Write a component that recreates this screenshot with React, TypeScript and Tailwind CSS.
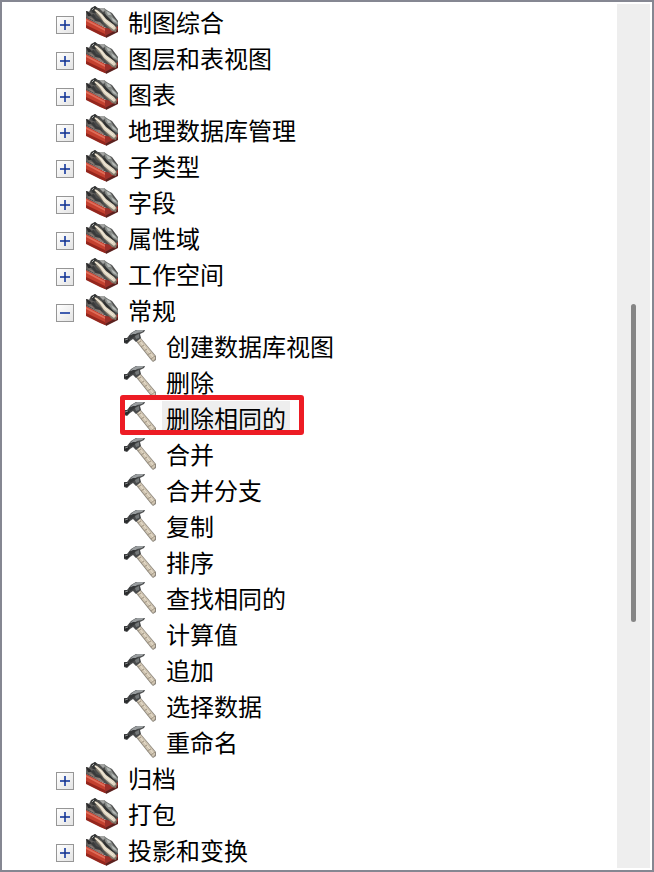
import { useState } from "react";

type Toolbox = { name: string; tools?: string[] };

const toolboxes: Toolbox[] = [
  { name: "制图综合" },
  { name: "图层和表视图" },
  { name: "图表" },
  { name: "地理数据库管理" },
  { name: "子类型" },
  { name: "字段" },
  { name: "属性域" },
  { name: "工作空间" },
  {
    name: "常规",
    tools: [
      "创建数据库视图",
      "删除",
      "删除相同的",
      "合并",
      "合并分支",
      "复制",
      "排序",
      "查找相同的",
      "计算值",
      "追加",
      "选择数据",
      "重命名",
    ],
  },
  { name: "归档" },
  { name: "打包" },
  { name: "投影和变换" },
];

function ToolboxIcon() {
  return (
    <svg className="size-8 shrink-0" viewBox="0 0 32 32" aria-hidden="true">
      <path d="M0 12 L19 22 L32 18 V25 L20 31 L0 21Z" fill="#9b302a" />
      <path d="M0 12 L19 22 V31 L0 21Z" fill="#c4402f" />
      <path d="M0 13 L19 23 V25 L0 15Z" fill="#df6d59" />
      <path d="M0 19 L19 28 V31 L14 29 L0 22Z" fill="#94261d" />
      <path d="M19 30 L32 23 V26 L20 32Z" fill="#5b211e" />
      <path d="M0 5 L3 6 L5 2 L9 0 L12 2 L18 2 L22 5 L26 7 L32 15 V20 L27 23 L20 22 L0 12Z" fill="#4c4d4c" />
      <path d="M0 5 L4 6 L9 8 L8 11 L11 14 L6 14 L0 11Z" fill="#64625f" />
      <path d="M0 5 L4 7 L6 10 L2 10Z" fill="#2b2b2c" />
      <path d="M4 9 L8 8 L10 12 L15 14 L17 19 L12 17 L8 13Z" fill="#393a3b" />
      <path d="M2 11 L6 12 L9 15 L14 16 L18 20 L15 20Z" fill="#8b7c75" />
      <path d="M13 2 L18 2 L20 4 L17 6Z" fill="#a4a5a3" />
      <path d="M18 3 L22 5 L25 7 L27 11 L32 16 V19 L26 16 L20 10Z" fill="#858986" />
      <path d="M20 5 L24 7 L25 9 L22 9Z M25 11 L29 14 L31 17 L27 15Z" fill="#b8bcb9" />
      <path d="M15 7 L19 8 L24 13 L30 20 L28 20 L22 16Z" fill="#303232" />
      <path d="M7 3 L11 4 L16 8 L20 13 L28 19 L31 22 L30 26 L26 25 L20 19 L15 13 L11 9Z" fill="#827a6c" />
      <path d="M8 3 L11 4 L16 8 L20 13 L28 19 L30 22 L28 24 L24 21 L18 16 L14 10Z" fill="#dfd5c2" />
      <path d="M9 4 L15 9 L19 14 L27 21" fill="none" stroke="#f6efdf" strokeWidth="1" />
      <path d="M5 3 L9 0 L11 2 L8 4 L10 7 L7 7Z" fill="#333535" />
      <path d="M6 4 L8 2" stroke="#a8aaa8" strokeWidth="1" />
    </svg>
  );
}

function HammerIcon() {
  return (
    <svg className="size-8 shrink-0" viewBox="0 0 32 32" aria-hidden="true">
      <path d="M11 10 L16 7 L32 26 V30 L29 32 L27 30Z" fill="#8d877d" />
      <path d="M12 10 L16 8 L31 26 V29 L29 31Z" fill="#cfc4b1" />
      <path d="M15 10 L30 28" stroke="#ebe2d0" strokeWidth="1" />
      <path d="M14 13 L17 11 M17 17 L20 15 M20 21 L23 19 M23 25 L27 23 M27 29 L31 26" stroke="#a09482" strokeWidth="1" />
      <path d="M0 8 L3 8 L7 3 L12 0 H21 L20 2 L16 4 L17 8 L12 12 L9 9 L6 11 L3 14 L0 13Z" fill="#484a4b" />
      <path d="M6 5 L9 2 L13 0 H20 L18 2 L13 3 L9 6Z" fill="#999d9f" />
      <path d="M5 6 L9 4 L13 4 L10 7 L6 9Z" fill="#353738" />
      <path d="M11 6 L15 4 L15 8 L12 9Z" fill="#747879" />
      <path d="M0 9 L4 8 L6 10 L3 13 L0 12Z" fill="#292b2c" />
      <path d="M1 10 L4 9" stroke="#8a8d8e" strokeWidth="1" />
    </svg>
  );
}

function ExpandButton({ open, name, onClick }: { open: boolean; name: string; onClick: () => void }) {
  return (
    <button
      type="button"
      aria-label={name}
      aria-expanded={open}
      onClick={onClick}
      className="mt-1 flex size-[18px] shrink-0 items-center justify-center border border-[#969696] bg-linear-to-br from-white to-[#e4e4e4]"
    >
      <svg className="size-4" viewBox="0 0 16 16" aria-hidden="true">
        <path d="M3 8H13" stroke="#405daf" strokeWidth="2" />
        {!open && <path d="M8 3V13" stroke="#405daf" strokeWidth="2" />}
        {!open && <path d="M7 7H9V9H7Z" fill="#253d86" />}
      </svg>
    </button>
  );
}

export default function App() {
  const [expanded, setExpanded] = useState<string[]>(["常规"]);
  const [selected, setSelected] = useState("删除相同的");

  const toggle = (name: string) =>
    setExpanded((names) => (names.includes(name) ? names.filter((n) => n !== name) : [...names, name]));

  return (
    <main className="flex min-h-screen border-2 border-[#858792] bg-white font-['Noto_Sans_CJK_SC',sans-serif] text-2xl leading-[34px] text-black">
      <ul className="min-w-0 flex-1 pt-[3px] pl-[54px]">
        {toolboxes.map((box) => {
          const open = expanded.includes(box.name);
          return (
            <li key={box.name}>
              <div className="flex h-9 items-center">
                <ExpandButton open={open} name={box.name} onClick={() => toggle(box.name)} />
                <div className="ml-3 flex items-center gap-2.5 self-start">
                  <ToolboxIcon />
                  <span className="whitespace-nowrap">{box.name}</span>
                </div>
              </div>
              {open && box.tools && (
                <ul className="pl-[68px]">
                  {box.tools.map((tool) => (
                    <li key={tool} className="relative flex h-9 items-start">
                      <button type="button" onClick={() => setSelected(tool)} className="flex items-center gap-1.5">
                        <HammerIcon />
                        <span className={`px-1 whitespace-nowrap ${tool === selected ? "bg-[#eeeeee]" : ""}`}>
                          {tool}
                        </span>
                      </button>
                      {tool === "删除相同的" && (
                        <span className="pointer-events-none absolute -top-1.5 -left-1 h-10 w-[184px] rounded-[3px] border-[5px] border-[#ed1c24]" />
                      )}
                    </li>
                  ))}
                </ul>
              )}
            </li>
          );
        })}
      </ul>
      <div className="my-0.5 mr-0.5 flex w-[33px] flex-col items-center bg-[#eeeeee]">
        <div className="grow-[300]" />
        <div className="w-[5px] grow-[318] rounded-full bg-[#858585]" />
        <div className="grow-[246]" />
      </div>
    </main>
  );
}
